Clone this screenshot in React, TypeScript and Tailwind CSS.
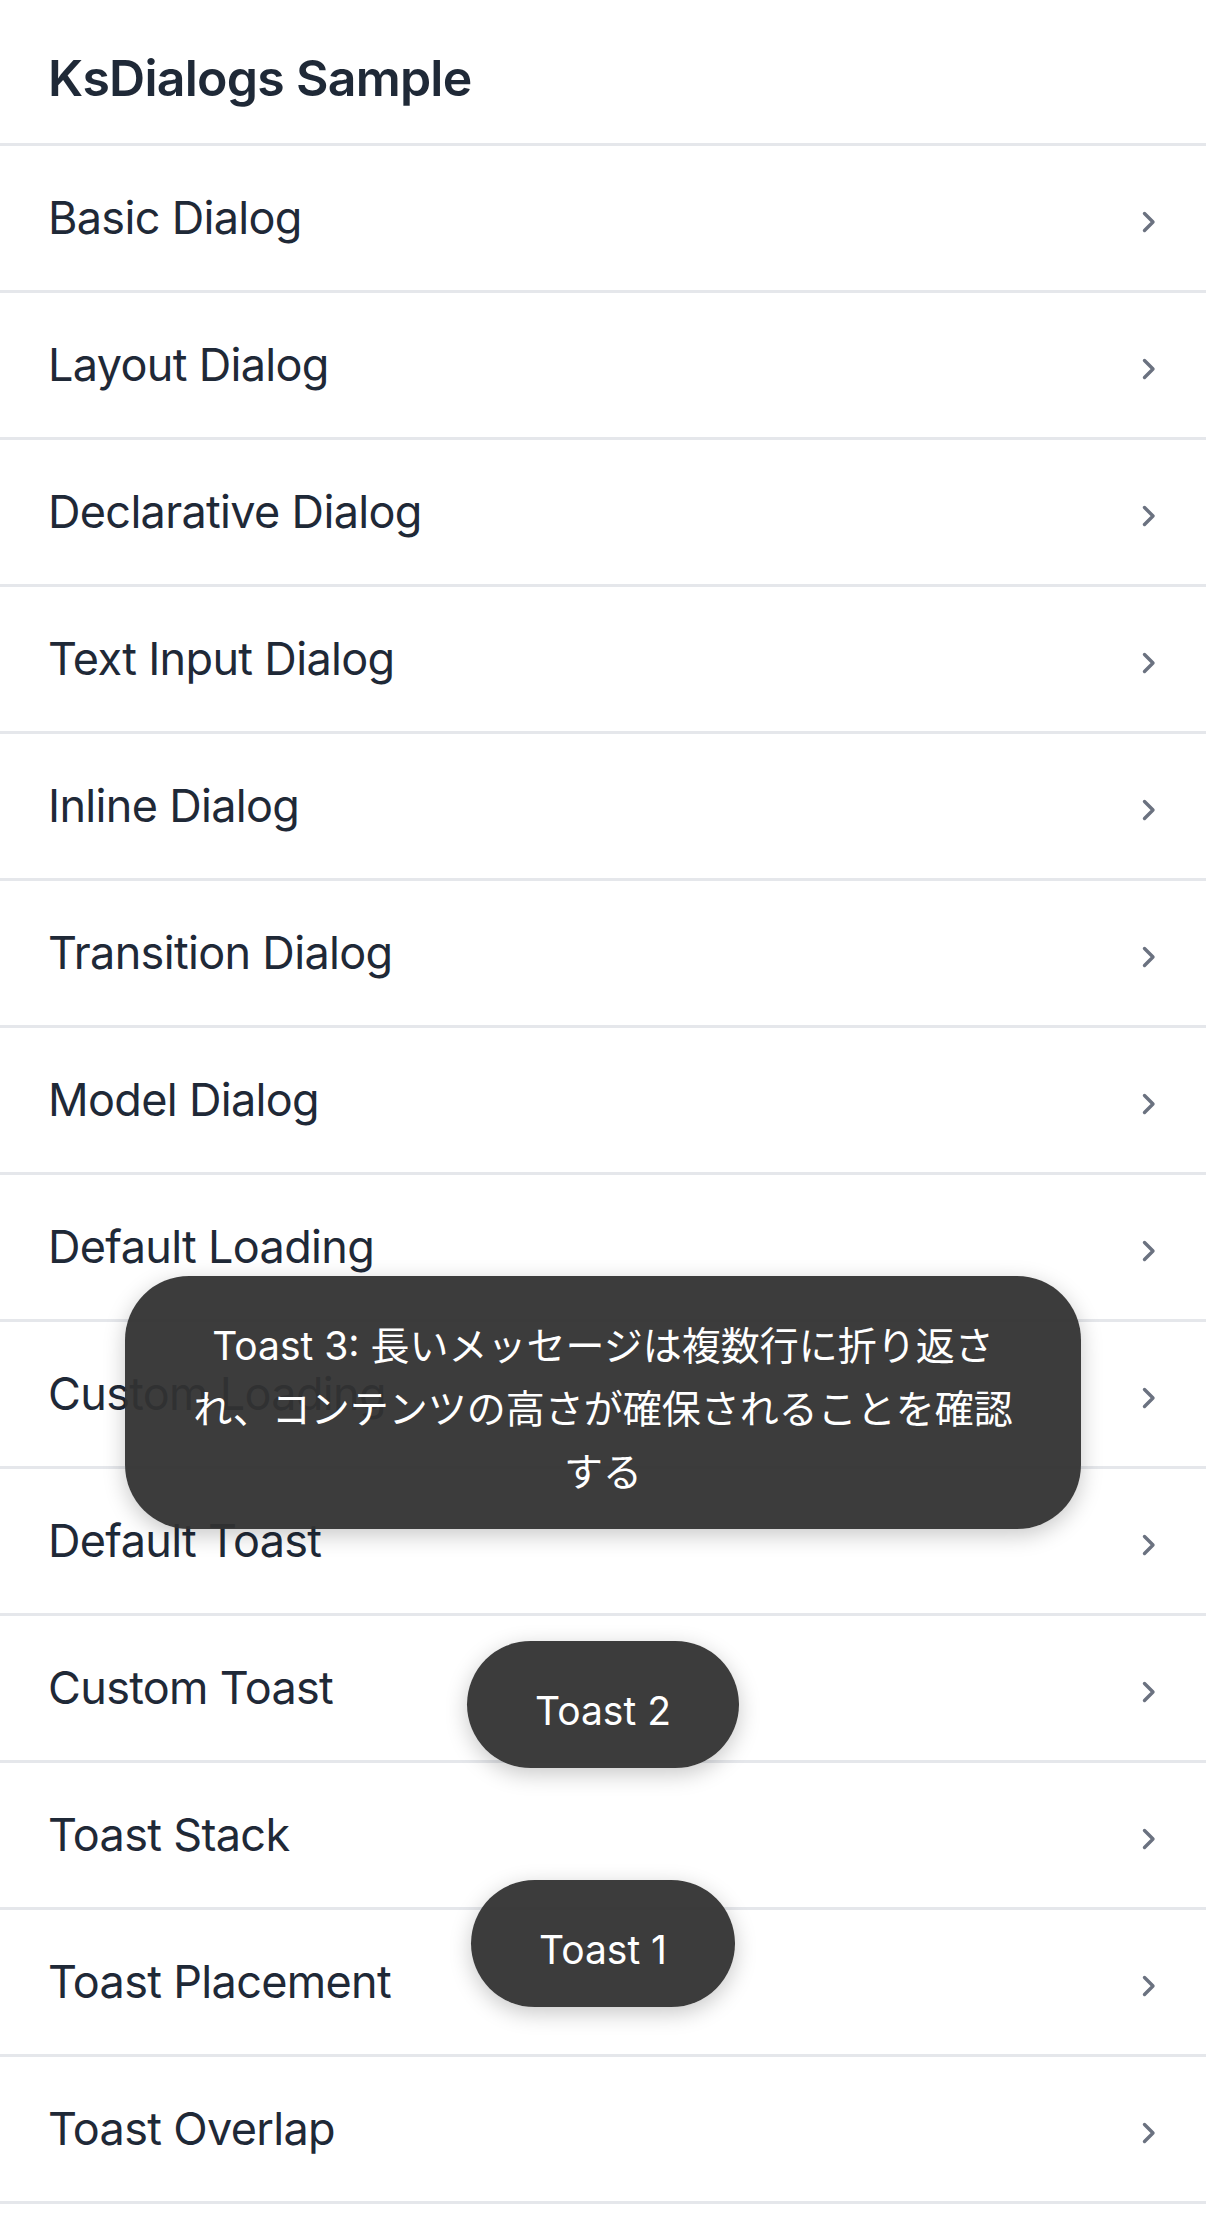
const ITEMS = [
  "Basic Dialog",
  "Layout Dialog",
  "Declarative Dialog",
  "Text Input Dialog",
  "Inline Dialog",
  "Transition Dialog",
  "Model Dialog",
  "Default Loading",
  "Custom Loading",
  "Default Toast",
  "Custom Toast",
  "Toast Stack",
  "Toast Placement",
  "Toast Overlap",
];

function Chevron() {
  return (
    <svg width="14" height="22" viewBox="0 0 14 22" className="mt-[8px]">
      <polyline
        points="2.5,2.5 11,11 2.5,19.5"
        fill="none"
        stroke="#6b7280"
        strokeWidth="3.4"
        strokeLinecap="round"
        strokeLinejoin="round"
      />
    </svg>
  );
}

function Toast({ children }: { children: React.ReactNode }) {
  return (
    <div className="bg-[rgba(49,49,49,0.95)] text-white rounded-[64px] px-[68px] pt-[38px] pb-[26px] text-[39px] leading-[63px] text-center shadow-[0_6px_22px_rgba(0,0,0,0.22)]">
      {children}
    </div>
  );
}

export default function App() {
  return (
    <div className="relative min-h-[2220px] bg-white font-[Inter,'Noto_Sans_CJK_JP',sans-serif] text-[#1f2937]">
      {/* Navigation header */}
      <header className="h-[146px] border-b-[3px] border-[#e5e7eb] flex items-center px-12 pt-[14px]">
        <h1 className="text-[50px] font-semibold tracking-[-0.015em]">
          KsDialogs Sample
        </h1>
      </header>

      {/* Sample list */}
      <ul>
        {ITEMS.map((item) => (
          <li
            key={item}
            className="h-[147px] border-b-[3px] border-[#e5e7eb] flex items-center justify-between pl-12 pr-[50px]"
          >
            <span className="text-[45px] tracking-[-0.015em]">{item}</span>
            <Chevron />
          </li>
        ))}
      </ul>

      {/* Toast stack */}
      <div className="absolute inset-x-0 bottom-[213px] flex flex-col items-center gap-[112px] pointer-events-none">
        <Toast>
          Toast 3: 長いメッセージは複数行に折り返さ
          <br />
          れ、コンテンツの高さが確保されることを確認
          <br />
          する
        </Toast>
        <Toast>Toast 2</Toast>
        <Toast>Toast 1</Toast>
      </div>
    </div>
  );
}
